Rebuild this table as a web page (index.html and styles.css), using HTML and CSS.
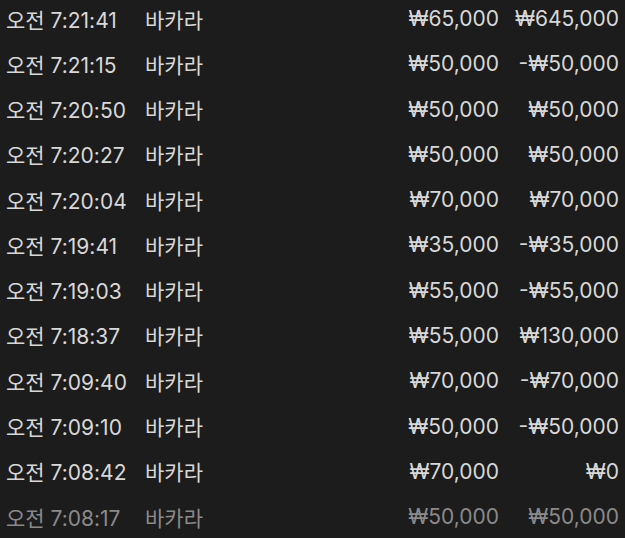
FILE: index.html
```html
<!DOCTYPE html>
<html lang="ko">
<head>
<meta charset="utf-8">
<link rel="stylesheet" href="styles.css">
</head>
<body>
<div class="list">
  <div class="row"><span class="time">오전 7:21:41</span><span class="game">바카라</span><span class="bet">₩65,000</span><span class="result">₩645,000</span></div>
  <div class="row"><span class="time">오전 7:21:15</span><span class="game">바카라</span><span class="bet">₩50,000</span><span class="result">-₩50,000</span></div>
  <div class="row"><span class="time">오전 7:20:50</span><span class="game">바카라</span><span class="bet">₩50,000</span><span class="result">₩50,000</span></div>
  <div class="row"><span class="time">오전 7:20:27</span><span class="game">바카라</span><span class="bet">₩50,000</span><span class="result">₩50,000</span></div>
  <div class="row"><span class="time">오전 7:20:04</span><span class="game">바카라</span><span class="bet">₩70,000</span><span class="result">₩70,000</span></div>
  <div class="row"><span class="time">오전 7:19:41</span><span class="game">바카라</span><span class="bet">₩35,000</span><span class="result">-₩35,000</span></div>
  <div class="row"><span class="time">오전 7:19:03</span><span class="game">바카라</span><span class="bet">₩55,000</span><span class="result">-₩55,000</span></div>
  <div class="row"><span class="time">오전 7:18:37</span><span class="game">바카라</span><span class="bet">₩55,000</span><span class="result">₩130,000</span></div>
  <div class="row"><span class="time">오전 7:09:40</span><span class="game">바카라</span><span class="bet">₩70,000</span><span class="result">-₩70,000</span></div>
  <div class="row"><span class="time">오전 7:09:10</span><span class="game">바카라</span><span class="bet">₩50,000</span><span class="result">-₩50,000</span></div>
  <div class="row"><span class="time">오전 7:08:42</span><span class="game">바카라</span><span class="bet">₩70,000</span><span class="result">₩0</span></div>
  <div class="row dim"><span class="time">오전 7:08:17</span><span class="game">바카라</span><span class="bet">₩50,000</span><span class="result">₩50,000</span></div>
</div>
</body>
</html>
```
FILE: styles.css
```css
html, body {
  margin: 0;
  padding: 0;
  background: #1c1c1c;
  height: 100%;
  overflow: hidden;
}
.list {
  margin-top: -4px;
  display: flex;
  flex-direction: column;
}
.row {
  height: 45.27px;
  display: grid;
  grid-template-columns: 139px 1fr 200px 120px;
  align-items: center;
  padding: 0 6px;
  color: #d8d8d8;
  font-family: Inter, "Noto Sans CJK KR", sans-serif;
  font-size: 21px;
  white-space: nowrap;
}
.row.dim {
  color: #8a8a8a;
}
.bet, .result {
  text-align: right;
}
```
